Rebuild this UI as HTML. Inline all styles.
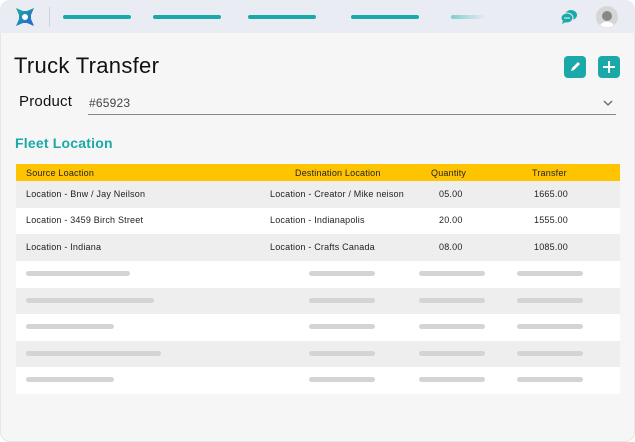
<!DOCTYPE html>
<html><head><style>
*{margin:0;padding:0;box-sizing:border-box}
body{width:635px;height:442px;background:#fff;font-family:"Liberation Sans",sans-serif;position:relative;overflow:hidden}
.frame{position:absolute;left:0;top:0;width:635px;height:442px;background:#f6f6f6;border-radius:10px;overflow:hidden;box-shadow:inset 0 0 0 1px #e6e6e6}
.top{position:absolute;left:0;top:0;width:635px;height:33px;background:#e9ecf3}
.bar{position:absolute;top:15px;height:4px;border-radius:2px;background:#1aa9a8}
.a{position:absolute}
.t{position:absolute;font-size:9px;color:#222;white-space:nowrap;letter-spacing:.2px}
.row{position:absolute;left:16px;width:604px}
.sk{position:absolute;height:5px;border-radius:3px;background:#d4d4d4}
</style></head><body>
<div class="frame">
<div class="top"></div>
<svg class="a" style="left:14px;top:6px" width="22" height="22" viewBox="0 0 22 22"><defs><linearGradient id="g" x1="0" y1="0" x2="1" y2="1"><stop offset="0" stop-color="#1ab0a0"/><stop offset="1" stop-color="#2a5fd0"/></linearGradient></defs><path d="M2 2 L9 5 L13 5 L20 2 L17 9 L17 13 L20 20 L13 17 L9 17 L2 20 L5 13 L5 9Z" fill="url(#g)"/><circle cx="11" cy="11" r="3" fill="#fff"/></svg>
<div class="a" style="left:49px;top:7px;width:1px;height:20px;background:#d0d4dc"></div>
<div class="bar" style="left:63px;width:68px"></div>
<div class="bar" style="left:153px;width:68px"></div>
<div class="bar" style="left:248px;width:68px"></div>
<div class="bar" style="left:351px;width:68px"></div>
<div class="bar" style="left:451px;width:35px;background:linear-gradient(90deg,#7dcfcf,#e9ecf3)"></div>
<svg class="a" style="left:560px;top:9px" width="18" height="16" viewBox="0 0 18 16"><ellipse cx="11" cy="6" rx="6" ry="5" fill="#1aa9a8"/><ellipse cx="7" cy="9" rx="6" ry="5" fill="#1aa9a8" stroke="#e9ecf3" stroke-width="1"/><path d="M3 12 L2 15 L6 13Z" fill="#1aa9a8"/><circle cx="5" cy="9" r=".8" fill="#fff"/><circle cx="7" cy="9" r=".8" fill="#fff"/><circle cx="9" cy="9" r=".8" fill="#fff"/></svg>
<svg class="a" style="left:596px;top:6px" width="22" height="22" viewBox="0 0 22 22"><circle cx="11" cy="11" r="11" fill="#d6d6d6"/><circle cx="11" cy="10" r="5" fill="#888"/><path d="M4 19 Q11 12 18 19 Q11 24 4 19Z" fill="#fff"/></svg>
<div class="t" style="left:14px;top:53px;font-size:22px;color:#111;letter-spacing:.3px">Truck Transfer</div>
<div class="a" style="left:564px;top:56px;width:22px;height:22px;border-radius:4px;background:#1aa9a8"></div>
<svg class="a" style="left:564px;top:56px" width="22" height="22"><path d="M7 15 L8 12 L14 6 L16 8 L10 14Z" fill="#fff"/></svg>
<div class="a" style="left:598px;top:56px;width:22px;height:22px;border-radius:4px;background:#1aa9a8"></div>
<div class="a" style="left:608px;top:61px;width:2px;height:12px;background:#fff"></div>
<div class="a" style="left:603px;top:66px;width:12px;height:2px;background:#fff"></div>
<div class="t" style="left:19px;top:93px;font-size:15px;color:#111">Product</div>
<div class="t" style="left:89px;top:96px;font-size:12px;color:#444">#65923</div>
<div class="a" style="left:88px;top:114px;width:528px;height:1px;background:#888"></div>
<svg class="a" style="left:603px;top:99px" width="10" height="8"><path d="M1 2 L5 6 L9 2" stroke="#666" stroke-width="1.3" fill="none"/></svg>
<div class="t" style="left:15px;top:135px;font-size:14px;font-weight:bold;color:#1aa9a8">Fleet Location</div>
<div class="row" style="top:164px;height:17px;background:#fec400"></div>
<div class="row" style="top:181px;height:27px;background:#eeeeee"></div>
<div class="row" style="top:208px;height:26px;background:#fff"></div>
<div class="row" style="top:234px;height:27px;background:#eeeeee"></div>
<div class="row" style="top:261px;height:27px;background:#fff"></div>
<div class="row" style="top:288px;height:26px;background:#eeeeee"></div>
<div class="row" style="top:314px;height:27px;background:#fff"></div>
<div class="row" style="top:341px;height:26px;background:#eeeeee"></div>
<div class="row" style="top:367px;height:27px;background:#fff"></div>
<div class="t" style="left:26px;top:168px">Source Loaction</div>
<div class="t" style="left:295px;top:168px">Destination Location</div>
<div class="t" style="left:431px;top:168px">Quantity</div>
<div class="t" style="left:532px;top:168px">Transfer</div>
<div class="t" style="left:26px;top:189px">Location - Bnw / Jay Neilson</div>
<div class="t" style="left:270px;top:189px">Location - Creator / Mike neison</div>
<div class="t" style="left:439px;top:189px">05.00</div>
<div class="t" style="left:534px;top:189px">1665.00</div>
<div class="t" style="left:26px;top:215px">Location - 3459 Birch Street</div>
<div class="t" style="left:270px;top:215px">Location - Indianapolis</div>
<div class="t" style="left:439px;top:215px">20.00</div>
<div class="t" style="left:534px;top:215px">1555.00</div>
<div class="t" style="left:26px;top:242px">Location - Indiana</div>
<div class="t" style="left:270px;top:242px">Location - Crafts Canada</div>
<div class="t" style="left:439px;top:242px">08.00</div>
<div class="t" style="left:534px;top:242px">1085.00</div>
<div class="sk" style="left:26px;top:271px;width:104px"></div>
<div class="sk" style="left:26px;top:298px;width:128px"></div>
<div class="sk" style="left:26px;top:324px;width:88px"></div>
<div class="sk" style="left:26px;top:351px;width:135px"></div>
<div class="sk" style="left:26px;top:377px;width:88px"></div>
<div class="sk" style="left:309px;top:271px;width:66px"></div>
<div class="sk" style="left:309px;top:298px;width:66px"></div>
<div class="sk" style="left:309px;top:324px;width:66px"></div>
<div class="sk" style="left:309px;top:351px;width:66px"></div>
<div class="sk" style="left:309px;top:377px;width:66px"></div>
<div class="sk" style="left:419px;top:271px;width:66px"></div>
<div class="sk" style="left:419px;top:298px;width:66px"></div>
<div class="sk" style="left:419px;top:324px;width:66px"></div>
<div class="sk" style="left:419px;top:351px;width:66px"></div>
<div class="sk" style="left:419px;top:377px;width:66px"></div>
<div class="sk" style="left:517px;top:271px;width:66px"></div>
<div class="sk" style="left:517px;top:298px;width:66px"></div>
<div class="sk" style="left:517px;top:324px;width:66px"></div>
<div class="sk" style="left:517px;top:351px;width:66px"></div>
<div class="sk" style="left:517px;top:377px;width:66px"></div>
</div>
</body></html>
